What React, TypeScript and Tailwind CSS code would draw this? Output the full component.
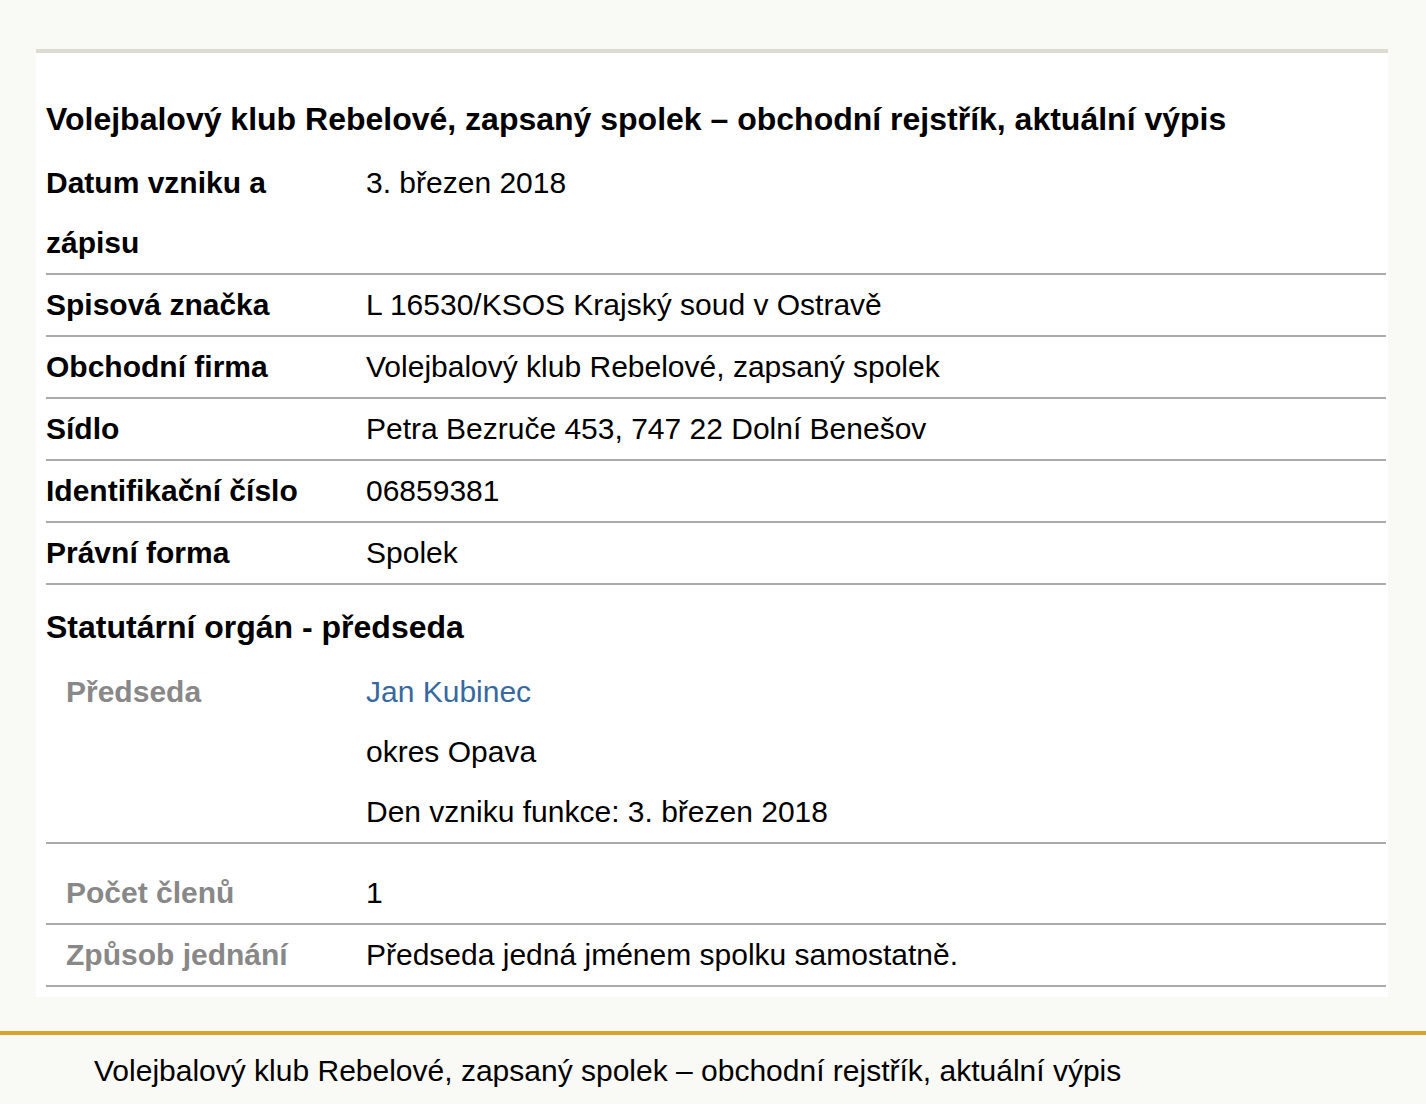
import React from "react";

type Row = { label: string; values: React.ReactNode[] };

const mainRows: Row[] = [
  { label: "Datum vzniku a zápisu", values: ["3. březen 2018"] },
  { label: "Spisová značka", values: ["L 16530/KSOS Krajský soud v Ostravě"] },
  { label: "Obchodní firma", values: ["Volejbalový klub Rebelové, zapsaný spolek"] },
  { label: "Sídlo", values: ["Petra Bezruče 453, 747 22 Dolní Benešov"] },
  { label: "Identifikační číslo", values: ["06859381"] },
  { label: "Právní forma", values: ["Spolek"] },
];

const App = () => {
  return (
    <div className="min-h-screen bg-[#f9f9f5] pt-[49px] text-black font-['Liberation_Sans',Arial,sans-serif]">
      <div className="ml-[36px] w-[1352px] bg-white border-t-4 border-[#dcdcd0] pl-[10px] pr-[2px] pb-[10px]">
        <h1 className="mt-[36px] mb-[4px] text-[32px] leading-[60px] font-bold">
          Volejbalový klub Rebelové, zapsaný spolek – obchodní rejstřík, aktuální výpis
        </h1>

        {mainRows.map((row, i) => (
          <div key={i} className="grid grid-cols-[320px_1fr] border-b-2 border-[#aaaaaa] text-[30px] leading-[60px]">
            <div className="pr-[24px] font-bold">{row.label}</div>
            <div>{row.values}</div>
          </div>
        ))}

        <h2 className="mt-[20px] mb-[12px] h-[45px] text-[32px] leading-[45px] font-bold">
          Statutární orgán - předseda
        </h2>

        <div className="grid grid-cols-[320px_1fr] border-b-2 border-[#aaaaaa] text-[30px] leading-[60px]">
          <div className="pl-[20px] font-bold text-[#888888]">Předseda</div>
          <div>
            <div className="text-[#3769a0]">Jan Kubinec</div>
            <div>okres Opava</div>
            <div>Den vzniku funkce: 3. březen 2018</div>
          </div>
        </div>

        <div className="grid grid-cols-[320px_1fr] border-b-2 border-[#aaaaaa] pt-[19px] text-[30px] leading-[60px]">
          <div className="pl-[20px] font-bold text-[#888888]">Počet členů</div>
          <div>1</div>
        </div>

        <div className="grid grid-cols-[320px_1fr] border-b-2 border-[#aaaaaa] text-[30px] leading-[60px]">
          <div className="pl-[20px] font-bold text-[#888888]">Způsob jednání</div>
          <div>Předseda jedná jménem spolku samostatně.</div>
        </div>
      </div>

      <footer className="mt-[34px] border-t-4 border-[#d8a42a] pl-[94px] pt-[6px] pb-[4px]">
        <p className="text-[30px] leading-[60px]">
          Volejbalový klub Rebelové, zapsaný spolek – obchodní rejstřík, aktuální výpis
        </p>
      </footer>
    </div>
  );
};

export default App;
